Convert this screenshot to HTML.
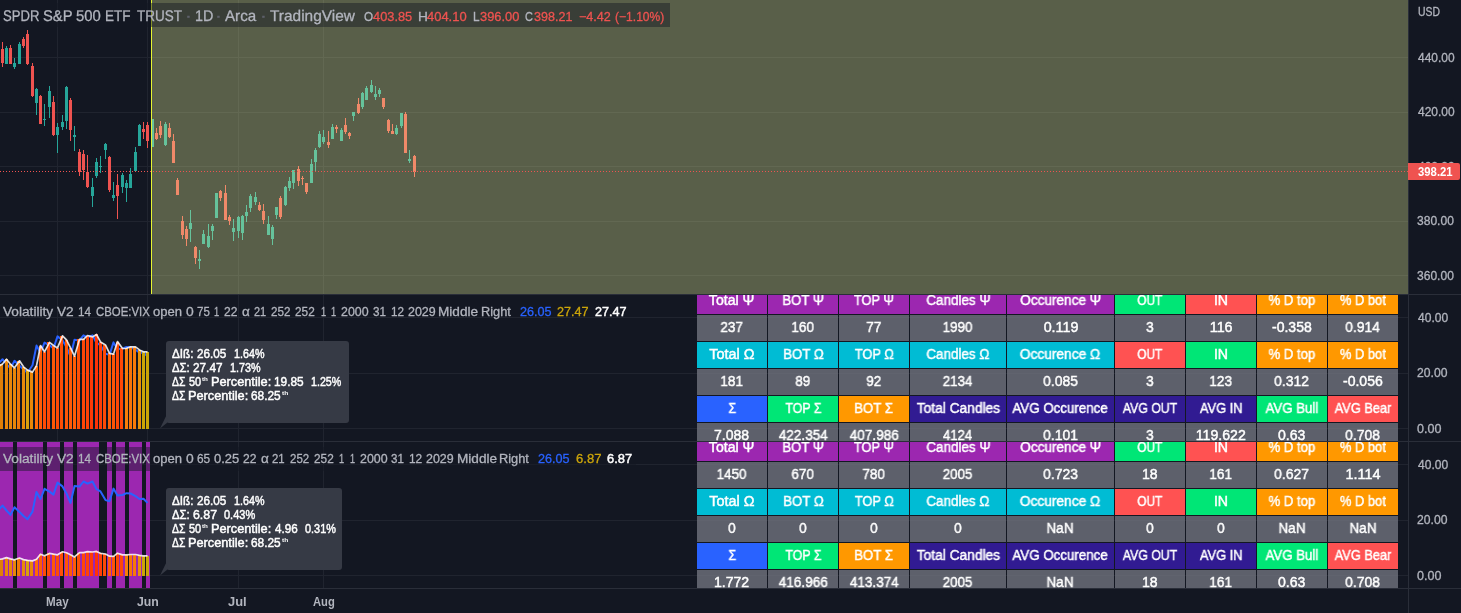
<!DOCTYPE html>
<html><head><meta charset="utf-8"><title>chart</title>
<style>
html,body{margin:0;padding:0}
body{width:1461px;height:613px;background:#131722;overflow:hidden;position:relative;font-family:"Liberation Sans",sans-serif}
svg{position:absolute;left:0;top:0}
.t{position:absolute;white-space:nowrap;line-height:1;transform-origin:0 0;display:block;-webkit-text-stroke:0.3px currentColor}
.t sup{font-size:6px;line-height:0;vertical-align:5px}
.t.nb{-webkit-text-stroke:0}
.tbl{position:absolute;left:697px;width:701px;overflow:hidden}
.c span{will-change:transform;-webkit-text-stroke:0.45px #fff}
.c{position:absolute;height:26px;color:#fff;font-size:14px;line-height:24px;text-align:center;white-space:nowrap}
.c span{display:inline-block}
.lg{position:absolute;left:0;background:rgba(19,23,34,0.46)}
.pl{position:absolute;left:1408px;top:163px;width:52px;height:17px;background:#ef5350;border-radius:0 2px 2px 0}
</style></head><body>
<svg width="1461" height="613" viewBox="0 0 1461 613" shape-rendering="crispEdges">
<rect x="0" y="57" width="1408" height="1" fill="#20242f"/>
<rect x="0" y="112" width="1408" height="1" fill="#20242f"/>
<rect x="0" y="166" width="1408" height="1" fill="#20242f"/>
<rect x="0" y="221" width="1408" height="1" fill="#20242f"/>
<rect x="0" y="275" width="1408" height="1" fill="#20242f"/>
<rect x="57" y="0" width="1" height="294" fill="#20242f"/>
<rect x="57" y="295" width="1" height="146" fill="#20242f"/>
<rect x="57" y="442" width="1" height="146" fill="#20242f"/>
<rect x="147" y="0" width="1" height="294" fill="#20242f"/>
<rect x="147" y="295" width="1" height="146" fill="#20242f"/>
<rect x="147" y="442" width="1" height="146" fill="#20242f"/>
<rect x="238" y="0" width="1" height="294" fill="#20242f"/>
<rect x="238" y="295" width="1" height="146" fill="#20242f"/>
<rect x="238" y="442" width="1" height="146" fill="#20242f"/>
<rect x="323" y="0" width="1" height="294" fill="#20242f"/>
<rect x="323" y="295" width="1" height="146" fill="#20242f"/>
<rect x="323" y="442" width="1" height="146" fill="#20242f"/>
<rect x="0" y="317" width="1408" height="1" fill="#20242f"/>
<rect x="0" y="373" width="1408" height="1" fill="#20242f"/>
<rect x="0" y="428" width="1408" height="1" fill="#20242f"/>
<rect x="0" y="464" width="1408" height="1" fill="#20242f"/>
<rect x="0" y="520" width="1408" height="1" fill="#20242f"/>
<rect x="0" y="575" width="1408" height="1" fill="#20242f"/>
<rect x="2" y="42" width="1" height="25" fill="#ef5350"/>
<rect x="1" y="49" width="3" height="14" fill="#ef5350"/>
<rect x="6" y="46" width="1" height="18" fill="#26a69a"/>
<rect x="5" y="48" width="3" height="16" fill="#26a69a"/>
<rect x="10" y="45" width="1" height="19" fill="#ef5350"/>
<rect x="9" y="48" width="3" height="16" fill="#ef5350"/>
<rect x="14" y="58" width="1" height="11" fill="#26a69a"/>
<rect x="13" y="63" width="3" height="4" fill="#26a69a"/>
<rect x="19" y="42" width="1" height="22" fill="#26a69a"/>
<rect x="18" y="44" width="3" height="20" fill="#26a69a"/>
<rect x="23" y="37" width="1" height="11" fill="#ef5350"/>
<rect x="22" y="39" width="3" height="7" fill="#ef5350"/>
<rect x="27" y="30" width="1" height="35" fill="#ef5350"/>
<rect x="26" y="34" width="3" height="30" fill="#ef5350"/>
<rect x="32" y="63" width="1" height="34" fill="#ef5350"/>
<rect x="31" y="66" width="3" height="30" fill="#ef5350"/>
<rect x="36" y="88" width="1" height="27" fill="#26a69a"/>
<rect x="35" y="89" width="3" height="14" fill="#26a69a"/>
<rect x="40" y="95" width="1" height="29" fill="#ef5350"/>
<rect x="39" y="96" width="3" height="28" fill="#ef5350"/>
<rect x="44" y="104" width="1" height="22" fill="#26a69a"/>
<rect x="43" y="119" width="3" height="1" fill="#26a69a"/>
<rect x="49" y="86" width="1" height="32" fill="#26a69a"/>
<rect x="48" y="91" width="3" height="16" fill="#26a69a"/>
<rect x="53" y="96" width="1" height="40" fill="#ef5350"/>
<rect x="52" y="102" width="3" height="33" fill="#ef5350"/>
<rect x="57" y="123" width="1" height="30" fill="#26a69a"/>
<rect x="56" y="127" width="3" height="8" fill="#26a69a"/>
<rect x="62" y="115" width="1" height="15" fill="#26a69a"/>
<rect x="61" y="122" width="3" height="5" fill="#26a69a"/>
<rect x="66" y="86" width="1" height="43" fill="#26a69a"/>
<rect x="65" y="87" width="3" height="34" fill="#26a69a"/>
<rect x="70" y="98" width="1" height="43" fill="#ef5350"/>
<rect x="69" y="100" width="3" height="30" fill="#ef5350"/>
<rect x="74" y="126" width="1" height="25" fill="#26a69a"/>
<rect x="73" y="135" width="3" height="2" fill="#26a69a"/>
<rect x="79" y="149" width="1" height="27" fill="#ef5350"/>
<rect x="78" y="152" width="3" height="20" fill="#ef5350"/>
<rect x="83" y="150" width="1" height="30" fill="#ef5350"/>
<rect x="82" y="154" width="3" height="16" fill="#ef5350"/>
<rect x="87" y="155" width="1" height="33" fill="#ef5350"/>
<rect x="86" y="172" width="3" height="15" fill="#ef5350"/>
<rect x="92" y="178" width="1" height="29" fill="#26a69a"/>
<rect x="91" y="187" width="3" height="9" fill="#26a69a"/>
<rect x="96" y="158" width="1" height="20" fill="#26a69a"/>
<rect x="95" y="162" width="3" height="14" fill="#26a69a"/>
<rect x="100" y="156" width="1" height="17" fill="#26a69a"/>
<rect x="99" y="166" width="3" height="1" fill="#26a69a"/>
<rect x="105" y="143" width="1" height="16" fill="#26a69a"/>
<rect x="104" y="144" width="3" height="6" fill="#26a69a"/>
<rect x="109" y="156" width="1" height="36" fill="#ef5350"/>
<rect x="108" y="157" width="3" height="33" fill="#ef5350"/>
<rect x="113" y="182" width="1" height="19" fill="#26a69a"/>
<rect x="112" y="195" width="3" height="3" fill="#26a69a"/>
<rect x="117" y="174" width="1" height="45" fill="#ef5350"/>
<rect x="116" y="185" width="3" height="11" fill="#ef5350"/>
<rect x="122" y="173" width="1" height="20" fill="#26a69a"/>
<rect x="121" y="175" width="3" height="12" fill="#26a69a"/>
<rect x="126" y="180" width="1" height="22" fill="#26a69a"/>
<rect x="125" y="183" width="3" height="5" fill="#26a69a"/>
<rect x="130" y="168" width="1" height="20" fill="#26a69a"/>
<rect x="129" y="174" width="3" height="14" fill="#26a69a"/>
<rect x="135" y="147" width="1" height="25" fill="#26a69a"/>
<rect x="134" y="152" width="3" height="19" fill="#26a69a"/>
<rect x="139" y="124" width="1" height="22" fill="#26a69a"/>
<rect x="138" y="125" width="3" height="21" fill="#26a69a"/>
<rect x="143" y="122" width="1" height="17" fill="#ef5350"/>
<rect x="142" y="129" width="3" height="3" fill="#ef5350"/>
<rect x="147" y="122" width="1" height="26" fill="#ef5350"/>
<rect x="146" y="125" width="3" height="16" fill="#ef5350"/>
<rect x="152" y="119" width="1" height="28" fill="#26a69a"/>
<rect x="151" y="119" width="3" height="28" fill="#26a69a"/>
<rect x="156" y="128" width="1" height="12" fill="#ef5350"/>
<rect x="155" y="133" width="3" height="6" fill="#ef5350"/>
<rect x="160" y="121" width="1" height="17" fill="#ef5350"/>
<rect x="159" y="126" width="3" height="9" fill="#ef5350"/>
<rect x="165" y="122" width="1" height="24" fill="#26a69a"/>
<rect x="164" y="124" width="3" height="21" fill="#26a69a"/>
<rect x="169" y="123" width="1" height="15" fill="#ef5350"/>
<rect x="168" y="128" width="3" height="9" fill="#ef5350"/>
<rect x="173" y="134" width="1" height="29" fill="#ef5350"/>
<rect x="172" y="141" width="3" height="22" fill="#ef5350"/>
<rect x="177" y="178" width="1" height="17" fill="#ef5350"/>
<rect x="176" y="180" width="3" height="15" fill="#ef5350"/>
<rect x="182" y="216" width="1" height="23" fill="#ef5350"/>
<rect x="181" y="221" width="3" height="14" fill="#ef5350"/>
<rect x="186" y="226" width="1" height="20" fill="#ef5350"/>
<rect x="185" y="229" width="3" height="10" fill="#ef5350"/>
<rect x="190" y="210" width="1" height="32" fill="#26a69a"/>
<rect x="189" y="223" width="3" height="6" fill="#26a69a"/>
<rect x="195" y="246" width="1" height="18" fill="#ef5350"/>
<rect x="194" y="247" width="3" height="11" fill="#ef5350"/>
<rect x="199" y="250" width="1" height="19" fill="#26a69a"/>
<rect x="198" y="259" width="3" height="2" fill="#26a69a"/>
<rect x="203" y="230" width="1" height="14" fill="#26a69a"/>
<rect x="202" y="234" width="3" height="10" fill="#26a69a"/>
<rect x="208" y="224" width="1" height="24" fill="#26a69a"/>
<rect x="207" y="236" width="3" height="11" fill="#26a69a"/>
<rect x="212" y="224" width="1" height="16" fill="#26a69a"/>
<rect x="211" y="226" width="3" height="5" fill="#26a69a"/>
<rect x="216" y="193" width="1" height="25" fill="#26a69a"/>
<rect x="215" y="193" width="3" height="25" fill="#26a69a"/>
<rect x="220" y="190" width="1" height="11" fill="#ef5350"/>
<rect x="219" y="191" width="3" height="7" fill="#ef5350"/>
<rect x="225" y="185" width="1" height="35" fill="#ef5350"/>
<rect x="224" y="193" width="3" height="27" fill="#ef5350"/>
<rect x="229" y="215" width="1" height="10" fill="#ef5350"/>
<rect x="228" y="217" width="3" height="4" fill="#ef5350"/>
<rect x="233" y="219" width="1" height="22" fill="#26a69a"/>
<rect x="232" y="228" width="3" height="4" fill="#26a69a"/>
<rect x="238" y="216" width="1" height="22" fill="#26a69a"/>
<rect x="237" y="217" width="3" height="14" fill="#26a69a"/>
<rect x="242" y="215" width="1" height="25" fill="#26a69a"/>
<rect x="241" y="216" width="3" height="17" fill="#26a69a"/>
<rect x="246" y="205" width="1" height="17" fill="#26a69a"/>
<rect x="245" y="212" width="3" height="4" fill="#26a69a"/>
<rect x="250" y="194" width="1" height="18" fill="#26a69a"/>
<rect x="249" y="196" width="3" height="12" fill="#26a69a"/>
<rect x="255" y="192" width="1" height="13" fill="#26a69a"/>
<rect x="254" y="197" width="3" height="5" fill="#26a69a"/>
<rect x="259" y="202" width="1" height="9" fill="#ef5350"/>
<rect x="258" y="205" width="3" height="5" fill="#ef5350"/>
<rect x="263" y="204" width="1" height="20" fill="#ef5350"/>
<rect x="262" y="211" width="3" height="9" fill="#ef5350"/>
<rect x="268" y="216" width="1" height="19" fill="#26a69a"/>
<rect x="267" y="224" width="3" height="11" fill="#26a69a"/>
<rect x="272" y="225" width="1" height="20" fill="#26a69a"/>
<rect x="271" y="227" width="3" height="12" fill="#26a69a"/>
<rect x="276" y="207" width="1" height="12" fill="#26a69a"/>
<rect x="275" y="207" width="3" height="8" fill="#26a69a"/>
<rect x="280" y="196" width="1" height="23" fill="#ef5350"/>
<rect x="279" y="198" width="3" height="19" fill="#ef5350"/>
<rect x="285" y="186" width="1" height="20" fill="#26a69a"/>
<rect x="284" y="187" width="3" height="18" fill="#26a69a"/>
<rect x="289" y="177" width="1" height="14" fill="#26a69a"/>
<rect x="288" y="181" width="3" height="7" fill="#26a69a"/>
<rect x="293" y="170" width="1" height="19" fill="#26a69a"/>
<rect x="292" y="170" width="3" height="13" fill="#26a69a"/>
<rect x="298" y="166" width="1" height="20" fill="#ef5350"/>
<rect x="297" y="169" width="3" height="12" fill="#ef5350"/>
<rect x="302" y="176" width="1" height="9" fill="#ef5350"/>
<rect x="301" y="178" width="3" height="1" fill="#ef5350"/>
<rect x="306" y="183" width="1" height="11" fill="#ef5350"/>
<rect x="305" y="183" width="3" height="9" fill="#ef5350"/>
<rect x="311" y="159" width="1" height="24" fill="#26a69a"/>
<rect x="310" y="164" width="3" height="19" fill="#26a69a"/>
<rect x="315" y="148" width="1" height="24" fill="#26a69a"/>
<rect x="314" y="150" width="3" height="12" fill="#26a69a"/>
<rect x="319" y="131" width="1" height="17" fill="#26a69a"/>
<rect x="318" y="134" width="3" height="13" fill="#26a69a"/>
<rect x="323" y="130" width="1" height="14" fill="#26a69a"/>
<rect x="322" y="137" width="3" height="5" fill="#26a69a"/>
<rect x="328" y="131" width="1" height="17" fill="#ef5350"/>
<rect x="327" y="142" width="3" height="3" fill="#ef5350"/>
<rect x="332" y="124" width="1" height="15" fill="#26a69a"/>
<rect x="331" y="127" width="3" height="12" fill="#26a69a"/>
<rect x="336" y="125" width="1" height="8" fill="#ef5350"/>
<rect x="335" y="127" width="3" height="2" fill="#ef5350"/>
<rect x="341" y="128" width="1" height="13" fill="#26a69a"/>
<rect x="340" y="130" width="3" height="11" fill="#26a69a"/>
<rect x="345" y="118" width="1" height="16" fill="#ef5350"/>
<rect x="344" y="125" width="3" height="7" fill="#ef5350"/>
<rect x="349" y="132" width="1" height="7" fill="#ef5350"/>
<rect x="348" y="133" width="3" height="3" fill="#ef5350"/>
<rect x="353" y="112" width="1" height="9" fill="#26a69a"/>
<rect x="352" y="112" width="3" height="4" fill="#26a69a"/>
<rect x="358" y="98" width="1" height="16" fill="#ef5350"/>
<rect x="357" y="104" width="3" height="9" fill="#ef5350"/>
<rect x="362" y="92" width="1" height="17" fill="#26a69a"/>
<rect x="361" y="93" width="3" height="14" fill="#26a69a"/>
<rect x="366" y="86" width="1" height="14" fill="#26a69a"/>
<rect x="365" y="88" width="3" height="12" fill="#26a69a"/>
<rect x="371" y="80" width="1" height="13" fill="#26a69a"/>
<rect x="370" y="85" width="3" height="7" fill="#26a69a"/>
<rect x="375" y="86" width="1" height="14" fill="#26a69a"/>
<rect x="374" y="94" width="3" height="3" fill="#26a69a"/>
<rect x="379" y="88" width="1" height="9" fill="#26a69a"/>
<rect x="378" y="90" width="3" height="4" fill="#26a69a"/>
<rect x="383" y="98" width="1" height="11" fill="#ef5350"/>
<rect x="382" y="98" width="3" height="9" fill="#ef5350"/>
<rect x="388" y="119" width="1" height="14" fill="#ef5350"/>
<rect x="387" y="120" width="3" height="11" fill="#ef5350"/>
<rect x="392" y="124" width="1" height="10" fill="#ef5350"/>
<rect x="391" y="131" width="3" height="3" fill="#ef5350"/>
<rect x="396" y="125" width="1" height="10" fill="#26a69a"/>
<rect x="395" y="128" width="3" height="6" fill="#26a69a"/>
<rect x="401" y="113" width="1" height="15" fill="#26a69a"/>
<rect x="400" y="113" width="3" height="13" fill="#26a69a"/>
<rect x="405" y="112" width="1" height="41" fill="#ef5350"/>
<rect x="404" y="114" width="3" height="39" fill="#ef5350"/>
<rect x="409" y="150" width="1" height="13" fill="#26a69a"/>
<rect x="408" y="159" width="3" height="2" fill="#26a69a"/>
<rect x="414" y="155" width="1" height="22" fill="#ef5350"/>
<rect x="413" y="156" width="3" height="16" fill="#ef5350"/>
<rect x="152" y="0" width="1256" height="294" fill="#f3ff9f" fill-opacity="0.312"/>
<rect x="151" y="0" width="1" height="294" fill="#e6f532"/>
<rect x="0" y="171" width="1" height="1" fill="#ef5350"/><rect x="3" y="171" width="1" height="1" fill="#ef5350"/><rect x="6" y="171" width="1" height="1" fill="#ef5350"/><rect x="9" y="171" width="1" height="1" fill="#ef5350"/><rect x="12" y="171" width="1" height="1" fill="#ef5350"/><rect x="15" y="171" width="1" height="1" fill="#ef5350"/><rect x="18" y="171" width="1" height="1" fill="#ef5350"/><rect x="21" y="171" width="1" height="1" fill="#ef5350"/><rect x="24" y="171" width="1" height="1" fill="#ef5350"/><rect x="27" y="171" width="1" height="1" fill="#ef5350"/><rect x="30" y="171" width="1" height="1" fill="#ef5350"/><rect x="33" y="171" width="1" height="1" fill="#ef5350"/><rect x="36" y="171" width="1" height="1" fill="#ef5350"/><rect x="39" y="171" width="1" height="1" fill="#ef5350"/><rect x="42" y="171" width="1" height="1" fill="#ef5350"/><rect x="45" y="171" width="1" height="1" fill="#ef5350"/><rect x="48" y="171" width="1" height="1" fill="#ef5350"/><rect x="51" y="171" width="1" height="1" fill="#ef5350"/><rect x="54" y="171" width="1" height="1" fill="#ef5350"/><rect x="57" y="171" width="1" height="1" fill="#ef5350"/><rect x="60" y="171" width="1" height="1" fill="#ef5350"/><rect x="63" y="171" width="1" height="1" fill="#ef5350"/><rect x="66" y="171" width="1" height="1" fill="#ef5350"/><rect x="69" y="171" width="1" height="1" fill="#ef5350"/><rect x="72" y="171" width="1" height="1" fill="#ef5350"/><rect x="75" y="171" width="1" height="1" fill="#ef5350"/><rect x="78" y="171" width="1" height="1" fill="#ef5350"/><rect x="81" y="171" width="1" height="1" fill="#ef5350"/><rect x="84" y="171" width="1" height="1" fill="#ef5350"/><rect x="87" y="171" width="1" height="1" fill="#ef5350"/><rect x="90" y="171" width="1" height="1" fill="#ef5350"/><rect x="93" y="171" width="1" height="1" fill="#ef5350"/><rect x="96" y="171" width="1" height="1" fill="#ef5350"/><rect x="99" y="171" width="1" height="1" fill="#ef5350"/><rect x="102" y="171" width="1" height="1" fill="#ef5350"/><rect x="105" y="171" width="1" height="1" fill="#ef5350"/><rect x="108" y="171" width="1" height="1" fill="#ef5350"/><rect x="111" y="171" width="1" height="1" fill="#ef5350"/><rect x="114" y="171" width="1" height="1" fill="#ef5350"/><rect x="117" y="171" width="1" height="1" fill="#ef5350"/><rect x="120" y="171" width="1" height="1" fill="#ef5350"/><rect x="123" y="171" width="1" height="1" fill="#ef5350"/><rect x="126" y="171" width="1" height="1" fill="#ef5350"/><rect x="129" y="171" width="1" height="1" fill="#ef5350"/><rect x="132" y="171" width="1" height="1" fill="#ef5350"/><rect x="135" y="171" width="1" height="1" fill="#ef5350"/><rect x="138" y="171" width="1" height="1" fill="#ef5350"/><rect x="141" y="171" width="1" height="1" fill="#ef5350"/><rect x="144" y="171" width="1" height="1" fill="#ef5350"/><rect x="147" y="171" width="1" height="1" fill="#ef5350"/><rect x="150" y="171" width="1" height="1" fill="#ef5350"/><rect x="153" y="171" width="1" height="1" fill="#ef5350"/><rect x="156" y="171" width="1" height="1" fill="#ef5350"/><rect x="159" y="171" width="1" height="1" fill="#ef5350"/><rect x="162" y="171" width="1" height="1" fill="#ef5350"/><rect x="165" y="171" width="1" height="1" fill="#ef5350"/><rect x="168" y="171" width="1" height="1" fill="#ef5350"/><rect x="171" y="171" width="1" height="1" fill="#ef5350"/><rect x="174" y="171" width="1" height="1" fill="#ef5350"/><rect x="177" y="171" width="1" height="1" fill="#ef5350"/><rect x="180" y="171" width="1" height="1" fill="#ef5350"/><rect x="183" y="171" width="1" height="1" fill="#ef5350"/><rect x="186" y="171" width="1" height="1" fill="#ef5350"/><rect x="189" y="171" width="1" height="1" fill="#ef5350"/><rect x="192" y="171" width="1" height="1" fill="#ef5350"/><rect x="195" y="171" width="1" height="1" fill="#ef5350"/><rect x="198" y="171" width="1" height="1" fill="#ef5350"/><rect x="201" y="171" width="1" height="1" fill="#ef5350"/><rect x="204" y="171" width="1" height="1" fill="#ef5350"/><rect x="207" y="171" width="1" height="1" fill="#ef5350"/><rect x="210" y="171" width="1" height="1" fill="#ef5350"/><rect x="213" y="171" width="1" height="1" fill="#ef5350"/><rect x="216" y="171" width="1" height="1" fill="#ef5350"/><rect x="219" y="171" width="1" height="1" fill="#ef5350"/><rect x="222" y="171" width="1" height="1" fill="#ef5350"/><rect x="225" y="171" width="1" height="1" fill="#ef5350"/><rect x="228" y="171" width="1" height="1" fill="#ef5350"/><rect x="231" y="171" width="1" height="1" fill="#ef5350"/><rect x="234" y="171" width="1" height="1" fill="#ef5350"/><rect x="237" y="171" width="1" height="1" fill="#ef5350"/><rect x="240" y="171" width="1" height="1" fill="#ef5350"/><rect x="243" y="171" width="1" height="1" fill="#ef5350"/><rect x="246" y="171" width="1" height="1" fill="#ef5350"/><rect x="249" y="171" width="1" height="1" fill="#ef5350"/><rect x="252" y="171" width="1" height="1" fill="#ef5350"/><rect x="255" y="171" width="1" height="1" fill="#ef5350"/><rect x="258" y="171" width="1" height="1" fill="#ef5350"/><rect x="261" y="171" width="1" height="1" fill="#ef5350"/><rect x="264" y="171" width="1" height="1" fill="#ef5350"/><rect x="267" y="171" width="1" height="1" fill="#ef5350"/><rect x="270" y="171" width="1" height="1" fill="#ef5350"/><rect x="273" y="171" width="1" height="1" fill="#ef5350"/><rect x="276" y="171" width="1" height="1" fill="#ef5350"/><rect x="279" y="171" width="1" height="1" fill="#ef5350"/><rect x="282" y="171" width="1" height="1" fill="#ef5350"/><rect x="285" y="171" width="1" height="1" fill="#ef5350"/><rect x="288" y="171" width="1" height="1" fill="#ef5350"/><rect x="291" y="171" width="1" height="1" fill="#ef5350"/><rect x="294" y="171" width="1" height="1" fill="#ef5350"/><rect x="297" y="171" width="1" height="1" fill="#ef5350"/><rect x="300" y="171" width="1" height="1" fill="#ef5350"/><rect x="303" y="171" width="1" height="1" fill="#ef5350"/><rect x="306" y="171" width="1" height="1" fill="#ef5350"/><rect x="309" y="171" width="1" height="1" fill="#ef5350"/><rect x="312" y="171" width="1" height="1" fill="#ef5350"/><rect x="315" y="171" width="1" height="1" fill="#ef5350"/><rect x="318" y="171" width="1" height="1" fill="#ef5350"/><rect x="321" y="171" width="1" height="1" fill="#ef5350"/><rect x="324" y="171" width="1" height="1" fill="#ef5350"/><rect x="327" y="171" width="1" height="1" fill="#ef5350"/><rect x="330" y="171" width="1" height="1" fill="#ef5350"/><rect x="333" y="171" width="1" height="1" fill="#ef5350"/><rect x="336" y="171" width="1" height="1" fill="#ef5350"/><rect x="339" y="171" width="1" height="1" fill="#ef5350"/><rect x="342" y="171" width="1" height="1" fill="#ef5350"/><rect x="345" y="171" width="1" height="1" fill="#ef5350"/><rect x="348" y="171" width="1" height="1" fill="#ef5350"/><rect x="351" y="171" width="1" height="1" fill="#ef5350"/><rect x="354" y="171" width="1" height="1" fill="#ef5350"/><rect x="357" y="171" width="1" height="1" fill="#ef5350"/><rect x="360" y="171" width="1" height="1" fill="#ef5350"/><rect x="363" y="171" width="1" height="1" fill="#ef5350"/><rect x="366" y="171" width="1" height="1" fill="#ef5350"/><rect x="369" y="171" width="1" height="1" fill="#ef5350"/><rect x="372" y="171" width="1" height="1" fill="#ef5350"/><rect x="375" y="171" width="1" height="1" fill="#ef5350"/><rect x="378" y="171" width="1" height="1" fill="#ef5350"/><rect x="381" y="171" width="1" height="1" fill="#ef5350"/><rect x="384" y="171" width="1" height="1" fill="#ef5350"/><rect x="387" y="171" width="1" height="1" fill="#ef5350"/><rect x="390" y="171" width="1" height="1" fill="#ef5350"/><rect x="393" y="171" width="1" height="1" fill="#ef5350"/><rect x="396" y="171" width="1" height="1" fill="#ef5350"/><rect x="399" y="171" width="1" height="1" fill="#ef5350"/><rect x="402" y="171" width="1" height="1" fill="#ef5350"/><rect x="405" y="171" width="1" height="1" fill="#ef5350"/><rect x="408" y="171" width="1" height="1" fill="#ef5350"/><rect x="411" y="171" width="1" height="1" fill="#ef5350"/><rect x="414" y="171" width="1" height="1" fill="#ef5350"/><rect x="417" y="171" width="1" height="1" fill="#ef5350"/><rect x="420" y="171" width="1" height="1" fill="#ef5350"/><rect x="423" y="171" width="1" height="1" fill="#ef5350"/><rect x="426" y="171" width="1" height="1" fill="#ef5350"/><rect x="429" y="171" width="1" height="1" fill="#ef5350"/><rect x="432" y="171" width="1" height="1" fill="#ef5350"/><rect x="435" y="171" width="1" height="1" fill="#ef5350"/><rect x="438" y="171" width="1" height="1" fill="#ef5350"/><rect x="441" y="171" width="1" height="1" fill="#ef5350"/><rect x="444" y="171" width="1" height="1" fill="#ef5350"/><rect x="447" y="171" width="1" height="1" fill="#ef5350"/><rect x="450" y="171" width="1" height="1" fill="#ef5350"/><rect x="453" y="171" width="1" height="1" fill="#ef5350"/><rect x="456" y="171" width="1" height="1" fill="#ef5350"/><rect x="459" y="171" width="1" height="1" fill="#ef5350"/><rect x="462" y="171" width="1" height="1" fill="#ef5350"/><rect x="465" y="171" width="1" height="1" fill="#ef5350"/><rect x="468" y="171" width="1" height="1" fill="#ef5350"/><rect x="471" y="171" width="1" height="1" fill="#ef5350"/><rect x="474" y="171" width="1" height="1" fill="#ef5350"/><rect x="477" y="171" width="1" height="1" fill="#ef5350"/><rect x="480" y="171" width="1" height="1" fill="#ef5350"/><rect x="483" y="171" width="1" height="1" fill="#ef5350"/><rect x="486" y="171" width="1" height="1" fill="#ef5350"/><rect x="489" y="171" width="1" height="1" fill="#ef5350"/><rect x="492" y="171" width="1" height="1" fill="#ef5350"/><rect x="495" y="171" width="1" height="1" fill="#ef5350"/><rect x="498" y="171" width="1" height="1" fill="#ef5350"/><rect x="501" y="171" width="1" height="1" fill="#ef5350"/><rect x="504" y="171" width="1" height="1" fill="#ef5350"/><rect x="507" y="171" width="1" height="1" fill="#ef5350"/><rect x="510" y="171" width="1" height="1" fill="#ef5350"/><rect x="513" y="171" width="1" height="1" fill="#ef5350"/><rect x="516" y="171" width="1" height="1" fill="#ef5350"/><rect x="519" y="171" width="1" height="1" fill="#ef5350"/><rect x="522" y="171" width="1" height="1" fill="#ef5350"/><rect x="525" y="171" width="1" height="1" fill="#ef5350"/><rect x="528" y="171" width="1" height="1" fill="#ef5350"/><rect x="531" y="171" width="1" height="1" fill="#ef5350"/><rect x="534" y="171" width="1" height="1" fill="#ef5350"/><rect x="537" y="171" width="1" height="1" fill="#ef5350"/><rect x="540" y="171" width="1" height="1" fill="#ef5350"/><rect x="543" y="171" width="1" height="1" fill="#ef5350"/><rect x="546" y="171" width="1" height="1" fill="#ef5350"/><rect x="549" y="171" width="1" height="1" fill="#ef5350"/><rect x="552" y="171" width="1" height="1" fill="#ef5350"/><rect x="555" y="171" width="1" height="1" fill="#ef5350"/><rect x="558" y="171" width="1" height="1" fill="#ef5350"/><rect x="561" y="171" width="1" height="1" fill="#ef5350"/><rect x="564" y="171" width="1" height="1" fill="#ef5350"/><rect x="567" y="171" width="1" height="1" fill="#ef5350"/><rect x="570" y="171" width="1" height="1" fill="#ef5350"/><rect x="573" y="171" width="1" height="1" fill="#ef5350"/><rect x="576" y="171" width="1" height="1" fill="#ef5350"/><rect x="579" y="171" width="1" height="1" fill="#ef5350"/><rect x="582" y="171" width="1" height="1" fill="#ef5350"/><rect x="585" y="171" width="1" height="1" fill="#ef5350"/><rect x="588" y="171" width="1" height="1" fill="#ef5350"/><rect x="591" y="171" width="1" height="1" fill="#ef5350"/><rect x="594" y="171" width="1" height="1" fill="#ef5350"/><rect x="597" y="171" width="1" height="1" fill="#ef5350"/><rect x="600" y="171" width="1" height="1" fill="#ef5350"/><rect x="603" y="171" width="1" height="1" fill="#ef5350"/><rect x="606" y="171" width="1" height="1" fill="#ef5350"/><rect x="609" y="171" width="1" height="1" fill="#ef5350"/><rect x="612" y="171" width="1" height="1" fill="#ef5350"/><rect x="615" y="171" width="1" height="1" fill="#ef5350"/><rect x="618" y="171" width="1" height="1" fill="#ef5350"/><rect x="621" y="171" width="1" height="1" fill="#ef5350"/><rect x="624" y="171" width="1" height="1" fill="#ef5350"/><rect x="627" y="171" width="1" height="1" fill="#ef5350"/><rect x="630" y="171" width="1" height="1" fill="#ef5350"/><rect x="633" y="171" width="1" height="1" fill="#ef5350"/><rect x="636" y="171" width="1" height="1" fill="#ef5350"/><rect x="639" y="171" width="1" height="1" fill="#ef5350"/><rect x="642" y="171" width="1" height="1" fill="#ef5350"/><rect x="645" y="171" width="1" height="1" fill="#ef5350"/><rect x="648" y="171" width="1" height="1" fill="#ef5350"/><rect x="651" y="171" width="1" height="1" fill="#ef5350"/><rect x="654" y="171" width="1" height="1" fill="#ef5350"/><rect x="657" y="171" width="1" height="1" fill="#ef5350"/><rect x="660" y="171" width="1" height="1" fill="#ef5350"/><rect x="663" y="171" width="1" height="1" fill="#ef5350"/><rect x="666" y="171" width="1" height="1" fill="#ef5350"/><rect x="669" y="171" width="1" height="1" fill="#ef5350"/><rect x="672" y="171" width="1" height="1" fill="#ef5350"/><rect x="675" y="171" width="1" height="1" fill="#ef5350"/><rect x="678" y="171" width="1" height="1" fill="#ef5350"/><rect x="681" y="171" width="1" height="1" fill="#ef5350"/><rect x="684" y="171" width="1" height="1" fill="#ef5350"/><rect x="687" y="171" width="1" height="1" fill="#ef5350"/><rect x="690" y="171" width="1" height="1" fill="#ef5350"/><rect x="693" y="171" width="1" height="1" fill="#ef5350"/><rect x="696" y="171" width="1" height="1" fill="#ef5350"/><rect x="699" y="171" width="1" height="1" fill="#ef5350"/><rect x="702" y="171" width="1" height="1" fill="#ef5350"/><rect x="705" y="171" width="1" height="1" fill="#ef5350"/><rect x="708" y="171" width="1" height="1" fill="#ef5350"/><rect x="711" y="171" width="1" height="1" fill="#ef5350"/><rect x="714" y="171" width="1" height="1" fill="#ef5350"/><rect x="717" y="171" width="1" height="1" fill="#ef5350"/><rect x="720" y="171" width="1" height="1" fill="#ef5350"/><rect x="723" y="171" width="1" height="1" fill="#ef5350"/><rect x="726" y="171" width="1" height="1" fill="#ef5350"/><rect x="729" y="171" width="1" height="1" fill="#ef5350"/><rect x="732" y="171" width="1" height="1" fill="#ef5350"/><rect x="735" y="171" width="1" height="1" fill="#ef5350"/><rect x="738" y="171" width="1" height="1" fill="#ef5350"/><rect x="741" y="171" width="1" height="1" fill="#ef5350"/><rect x="744" y="171" width="1" height="1" fill="#ef5350"/><rect x="747" y="171" width="1" height="1" fill="#ef5350"/><rect x="750" y="171" width="1" height="1" fill="#ef5350"/><rect x="753" y="171" width="1" height="1" fill="#ef5350"/><rect x="756" y="171" width="1" height="1" fill="#ef5350"/><rect x="759" y="171" width="1" height="1" fill="#ef5350"/><rect x="762" y="171" width="1" height="1" fill="#ef5350"/><rect x="765" y="171" width="1" height="1" fill="#ef5350"/><rect x="768" y="171" width="1" height="1" fill="#ef5350"/><rect x="771" y="171" width="1" height="1" fill="#ef5350"/><rect x="774" y="171" width="1" height="1" fill="#ef5350"/><rect x="777" y="171" width="1" height="1" fill="#ef5350"/><rect x="780" y="171" width="1" height="1" fill="#ef5350"/><rect x="783" y="171" width="1" height="1" fill="#ef5350"/><rect x="786" y="171" width="1" height="1" fill="#ef5350"/><rect x="789" y="171" width="1" height="1" fill="#ef5350"/><rect x="792" y="171" width="1" height="1" fill="#ef5350"/><rect x="795" y="171" width="1" height="1" fill="#ef5350"/><rect x="798" y="171" width="1" height="1" fill="#ef5350"/><rect x="801" y="171" width="1" height="1" fill="#ef5350"/><rect x="804" y="171" width="1" height="1" fill="#ef5350"/><rect x="807" y="171" width="1" height="1" fill="#ef5350"/><rect x="810" y="171" width="1" height="1" fill="#ef5350"/><rect x="813" y="171" width="1" height="1" fill="#ef5350"/><rect x="816" y="171" width="1" height="1" fill="#ef5350"/><rect x="819" y="171" width="1" height="1" fill="#ef5350"/><rect x="822" y="171" width="1" height="1" fill="#ef5350"/><rect x="825" y="171" width="1" height="1" fill="#ef5350"/><rect x="828" y="171" width="1" height="1" fill="#ef5350"/><rect x="831" y="171" width="1" height="1" fill="#ef5350"/><rect x="834" y="171" width="1" height="1" fill="#ef5350"/><rect x="837" y="171" width="1" height="1" fill="#ef5350"/><rect x="840" y="171" width="1" height="1" fill="#ef5350"/><rect x="843" y="171" width="1" height="1" fill="#ef5350"/><rect x="846" y="171" width="1" height="1" fill="#ef5350"/><rect x="849" y="171" width="1" height="1" fill="#ef5350"/><rect x="852" y="171" width="1" height="1" fill="#ef5350"/><rect x="855" y="171" width="1" height="1" fill="#ef5350"/><rect x="858" y="171" width="1" height="1" fill="#ef5350"/><rect x="861" y="171" width="1" height="1" fill="#ef5350"/><rect x="864" y="171" width="1" height="1" fill="#ef5350"/><rect x="867" y="171" width="1" height="1" fill="#ef5350"/><rect x="870" y="171" width="1" height="1" fill="#ef5350"/><rect x="873" y="171" width="1" height="1" fill="#ef5350"/><rect x="876" y="171" width="1" height="1" fill="#ef5350"/><rect x="879" y="171" width="1" height="1" fill="#ef5350"/><rect x="882" y="171" width="1" height="1" fill="#ef5350"/><rect x="885" y="171" width="1" height="1" fill="#ef5350"/><rect x="888" y="171" width="1" height="1" fill="#ef5350"/><rect x="891" y="171" width="1" height="1" fill="#ef5350"/><rect x="894" y="171" width="1" height="1" fill="#ef5350"/><rect x="897" y="171" width="1" height="1" fill="#ef5350"/><rect x="900" y="171" width="1" height="1" fill="#ef5350"/><rect x="903" y="171" width="1" height="1" fill="#ef5350"/><rect x="906" y="171" width="1" height="1" fill="#ef5350"/><rect x="909" y="171" width="1" height="1" fill="#ef5350"/><rect x="912" y="171" width="1" height="1" fill="#ef5350"/><rect x="915" y="171" width="1" height="1" fill="#ef5350"/><rect x="918" y="171" width="1" height="1" fill="#ef5350"/><rect x="921" y="171" width="1" height="1" fill="#ef5350"/><rect x="924" y="171" width="1" height="1" fill="#ef5350"/><rect x="927" y="171" width="1" height="1" fill="#ef5350"/><rect x="930" y="171" width="1" height="1" fill="#ef5350"/><rect x="933" y="171" width="1" height="1" fill="#ef5350"/><rect x="936" y="171" width="1" height="1" fill="#ef5350"/><rect x="939" y="171" width="1" height="1" fill="#ef5350"/><rect x="942" y="171" width="1" height="1" fill="#ef5350"/><rect x="945" y="171" width="1" height="1" fill="#ef5350"/><rect x="948" y="171" width="1" height="1" fill="#ef5350"/><rect x="951" y="171" width="1" height="1" fill="#ef5350"/><rect x="954" y="171" width="1" height="1" fill="#ef5350"/><rect x="957" y="171" width="1" height="1" fill="#ef5350"/><rect x="960" y="171" width="1" height="1" fill="#ef5350"/><rect x="963" y="171" width="1" height="1" fill="#ef5350"/><rect x="966" y="171" width="1" height="1" fill="#ef5350"/><rect x="969" y="171" width="1" height="1" fill="#ef5350"/><rect x="972" y="171" width="1" height="1" fill="#ef5350"/><rect x="975" y="171" width="1" height="1" fill="#ef5350"/><rect x="978" y="171" width="1" height="1" fill="#ef5350"/><rect x="981" y="171" width="1" height="1" fill="#ef5350"/><rect x="984" y="171" width="1" height="1" fill="#ef5350"/><rect x="987" y="171" width="1" height="1" fill="#ef5350"/><rect x="990" y="171" width="1" height="1" fill="#ef5350"/><rect x="993" y="171" width="1" height="1" fill="#ef5350"/><rect x="996" y="171" width="1" height="1" fill="#ef5350"/><rect x="999" y="171" width="1" height="1" fill="#ef5350"/><rect x="1002" y="171" width="1" height="1" fill="#ef5350"/><rect x="1005" y="171" width="1" height="1" fill="#ef5350"/><rect x="1008" y="171" width="1" height="1" fill="#ef5350"/><rect x="1011" y="171" width="1" height="1" fill="#ef5350"/><rect x="1014" y="171" width="1" height="1" fill="#ef5350"/><rect x="1017" y="171" width="1" height="1" fill="#ef5350"/><rect x="1020" y="171" width="1" height="1" fill="#ef5350"/><rect x="1023" y="171" width="1" height="1" fill="#ef5350"/><rect x="1026" y="171" width="1" height="1" fill="#ef5350"/><rect x="1029" y="171" width="1" height="1" fill="#ef5350"/><rect x="1032" y="171" width="1" height="1" fill="#ef5350"/><rect x="1035" y="171" width="1" height="1" fill="#ef5350"/><rect x="1038" y="171" width="1" height="1" fill="#ef5350"/><rect x="1041" y="171" width="1" height="1" fill="#ef5350"/><rect x="1044" y="171" width="1" height="1" fill="#ef5350"/><rect x="1047" y="171" width="1" height="1" fill="#ef5350"/><rect x="1050" y="171" width="1" height="1" fill="#ef5350"/><rect x="1053" y="171" width="1" height="1" fill="#ef5350"/><rect x="1056" y="171" width="1" height="1" fill="#ef5350"/><rect x="1059" y="171" width="1" height="1" fill="#ef5350"/><rect x="1062" y="171" width="1" height="1" fill="#ef5350"/><rect x="1065" y="171" width="1" height="1" fill="#ef5350"/><rect x="1068" y="171" width="1" height="1" fill="#ef5350"/><rect x="1071" y="171" width="1" height="1" fill="#ef5350"/><rect x="1074" y="171" width="1" height="1" fill="#ef5350"/><rect x="1077" y="171" width="1" height="1" fill="#ef5350"/><rect x="1080" y="171" width="1" height="1" fill="#ef5350"/><rect x="1083" y="171" width="1" height="1" fill="#ef5350"/><rect x="1086" y="171" width="1" height="1" fill="#ef5350"/><rect x="1089" y="171" width="1" height="1" fill="#ef5350"/><rect x="1092" y="171" width="1" height="1" fill="#ef5350"/><rect x="1095" y="171" width="1" height="1" fill="#ef5350"/><rect x="1098" y="171" width="1" height="1" fill="#ef5350"/><rect x="1101" y="171" width="1" height="1" fill="#ef5350"/><rect x="1104" y="171" width="1" height="1" fill="#ef5350"/><rect x="1107" y="171" width="1" height="1" fill="#ef5350"/><rect x="1110" y="171" width="1" height="1" fill="#ef5350"/><rect x="1113" y="171" width="1" height="1" fill="#ef5350"/><rect x="1116" y="171" width="1" height="1" fill="#ef5350"/><rect x="1119" y="171" width="1" height="1" fill="#ef5350"/><rect x="1122" y="171" width="1" height="1" fill="#ef5350"/><rect x="1125" y="171" width="1" height="1" fill="#ef5350"/><rect x="1128" y="171" width="1" height="1" fill="#ef5350"/><rect x="1131" y="171" width="1" height="1" fill="#ef5350"/><rect x="1134" y="171" width="1" height="1" fill="#ef5350"/><rect x="1137" y="171" width="1" height="1" fill="#ef5350"/><rect x="1140" y="171" width="1" height="1" fill="#ef5350"/><rect x="1143" y="171" width="1" height="1" fill="#ef5350"/><rect x="1146" y="171" width="1" height="1" fill="#ef5350"/><rect x="1149" y="171" width="1" height="1" fill="#ef5350"/><rect x="1152" y="171" width="1" height="1" fill="#ef5350"/><rect x="1155" y="171" width="1" height="1" fill="#ef5350"/><rect x="1158" y="171" width="1" height="1" fill="#ef5350"/><rect x="1161" y="171" width="1" height="1" fill="#ef5350"/><rect x="1164" y="171" width="1" height="1" fill="#ef5350"/><rect x="1167" y="171" width="1" height="1" fill="#ef5350"/><rect x="1170" y="171" width="1" height="1" fill="#ef5350"/><rect x="1173" y="171" width="1" height="1" fill="#ef5350"/><rect x="1176" y="171" width="1" height="1" fill="#ef5350"/><rect x="1179" y="171" width="1" height="1" fill="#ef5350"/><rect x="1182" y="171" width="1" height="1" fill="#ef5350"/><rect x="1185" y="171" width="1" height="1" fill="#ef5350"/><rect x="1188" y="171" width="1" height="1" fill="#ef5350"/><rect x="1191" y="171" width="1" height="1" fill="#ef5350"/><rect x="1194" y="171" width="1" height="1" fill="#ef5350"/><rect x="1197" y="171" width="1" height="1" fill="#ef5350"/><rect x="1200" y="171" width="1" height="1" fill="#ef5350"/><rect x="1203" y="171" width="1" height="1" fill="#ef5350"/><rect x="1206" y="171" width="1" height="1" fill="#ef5350"/><rect x="1209" y="171" width="1" height="1" fill="#ef5350"/><rect x="1212" y="171" width="1" height="1" fill="#ef5350"/><rect x="1215" y="171" width="1" height="1" fill="#ef5350"/><rect x="1218" y="171" width="1" height="1" fill="#ef5350"/><rect x="1221" y="171" width="1" height="1" fill="#ef5350"/><rect x="1224" y="171" width="1" height="1" fill="#ef5350"/><rect x="1227" y="171" width="1" height="1" fill="#ef5350"/><rect x="1230" y="171" width="1" height="1" fill="#ef5350"/><rect x="1233" y="171" width="1" height="1" fill="#ef5350"/><rect x="1236" y="171" width="1" height="1" fill="#ef5350"/><rect x="1239" y="171" width="1" height="1" fill="#ef5350"/><rect x="1242" y="171" width="1" height="1" fill="#ef5350"/><rect x="1245" y="171" width="1" height="1" fill="#ef5350"/><rect x="1248" y="171" width="1" height="1" fill="#ef5350"/><rect x="1251" y="171" width="1" height="1" fill="#ef5350"/><rect x="1254" y="171" width="1" height="1" fill="#ef5350"/><rect x="1257" y="171" width="1" height="1" fill="#ef5350"/><rect x="1260" y="171" width="1" height="1" fill="#ef5350"/><rect x="1263" y="171" width="1" height="1" fill="#ef5350"/><rect x="1266" y="171" width="1" height="1" fill="#ef5350"/><rect x="1269" y="171" width="1" height="1" fill="#ef5350"/><rect x="1272" y="171" width="1" height="1" fill="#ef5350"/><rect x="1275" y="171" width="1" height="1" fill="#ef5350"/><rect x="1278" y="171" width="1" height="1" fill="#ef5350"/><rect x="1281" y="171" width="1" height="1" fill="#ef5350"/><rect x="1284" y="171" width="1" height="1" fill="#ef5350"/><rect x="1287" y="171" width="1" height="1" fill="#ef5350"/><rect x="1290" y="171" width="1" height="1" fill="#ef5350"/><rect x="1293" y="171" width="1" height="1" fill="#ef5350"/><rect x="1296" y="171" width="1" height="1" fill="#ef5350"/><rect x="1299" y="171" width="1" height="1" fill="#ef5350"/><rect x="1302" y="171" width="1" height="1" fill="#ef5350"/><rect x="1305" y="171" width="1" height="1" fill="#ef5350"/><rect x="1308" y="171" width="1" height="1" fill="#ef5350"/><rect x="1311" y="171" width="1" height="1" fill="#ef5350"/><rect x="1314" y="171" width="1" height="1" fill="#ef5350"/><rect x="1317" y="171" width="1" height="1" fill="#ef5350"/><rect x="1320" y="171" width="1" height="1" fill="#ef5350"/><rect x="1323" y="171" width="1" height="1" fill="#ef5350"/><rect x="1326" y="171" width="1" height="1" fill="#ef5350"/><rect x="1329" y="171" width="1" height="1" fill="#ef5350"/><rect x="1332" y="171" width="1" height="1" fill="#ef5350"/><rect x="1335" y="171" width="1" height="1" fill="#ef5350"/><rect x="1338" y="171" width="1" height="1" fill="#ef5350"/><rect x="1341" y="171" width="1" height="1" fill="#ef5350"/><rect x="1344" y="171" width="1" height="1" fill="#ef5350"/><rect x="1347" y="171" width="1" height="1" fill="#ef5350"/><rect x="1350" y="171" width="1" height="1" fill="#ef5350"/><rect x="1353" y="171" width="1" height="1" fill="#ef5350"/><rect x="1356" y="171" width="1" height="1" fill="#ef5350"/><rect x="1359" y="171" width="1" height="1" fill="#ef5350"/><rect x="1362" y="171" width="1" height="1" fill="#ef5350"/><rect x="1365" y="171" width="1" height="1" fill="#ef5350"/><rect x="1368" y="171" width="1" height="1" fill="#ef5350"/><rect x="1371" y="171" width="1" height="1" fill="#ef5350"/><rect x="1374" y="171" width="1" height="1" fill="#ef5350"/><rect x="1377" y="171" width="1" height="1" fill="#ef5350"/><rect x="1380" y="171" width="1" height="1" fill="#ef5350"/><rect x="1383" y="171" width="1" height="1" fill="#ef5350"/><rect x="1386" y="171" width="1" height="1" fill="#ef5350"/><rect x="1389" y="171" width="1" height="1" fill="#ef5350"/><rect x="1392" y="171" width="1" height="1" fill="#ef5350"/><rect x="1395" y="171" width="1" height="1" fill="#ef5350"/><rect x="1398" y="171" width="1" height="1" fill="#ef5350"/><rect x="1401" y="171" width="1" height="1" fill="#ef5350"/><rect x="1404" y="171" width="1" height="1" fill="#ef5350"/><rect x="1407" y="171" width="1" height="1" fill="#ef5350"/>
<rect x="0" y="294" width="1461" height="1" fill="#2a2e39"/>
<rect x="0" y="441" width="1461" height="1" fill="#2a2e39"/>
<rect x="0" y="588" width="1461" height="1" fill="#2a2e39"/>
<rect x="1408" y="0" width="1" height="613" fill="#2a2e39"/>
<polyline points="-1.8,363.8 2.5,359.2 6.5,364.1 10.5,368.4 14.5,360.8 19.5,365.6 23.5,369.5 27.5,372.8 32.5,365.2 36.5,345.6 40.5,352.7 44.5,342.6 49.5,345.4 53.5,348.3 57.5,336.4 62.5,340.2 66.5,347.2 70.5,356.5 74.5,339.7 79.5,340.4 83.5,335.3 87.5,337.5 92.5,335.3 96.5,343.0 100.5,345.2 105.5,353.8 109.5,354.9 113.5,342.4 117.5,349.1 122.5,348.7 126.5,346.9 130.5,347.2 135.5,349.8 139.5,352.7 143.5,352.4 147.5,356.5" fill="none" stroke="#2962ff" stroke-width="2" stroke-opacity="1" stroke-linejoin="round" shape-rendering="geometricPrecision"/>
<rect x="0" y="364" width="3" height="65" fill="#e07e08"/>
<rect x="5" y="359" width="3" height="70" fill="#e8840a"/>
<rect x="9" y="364" width="3" height="65" fill="#e8860a"/>
<rect x="13" y="368" width="3" height="61" fill="#e8860a"/>
<rect x="17" y="361" width="3" height="68" fill="#f07808"/>
<rect x="22" y="367" width="3" height="62" fill="#e88a0a"/>
<rect x="26" y="370" width="3" height="59" fill="#d9a00e"/>
<rect x="30" y="372" width="3" height="57" fill="#e88608"/>
<rect x="35" y="366" width="3" height="63" fill="#ff6a06"/>
<rect x="39" y="346" width="3" height="83" fill="#ff5c06"/>
<rect x="43" y="352" width="3" height="77" fill="#ff4c06"/>
<rect x="47" y="342" width="3" height="87" fill="#ff4a06"/>
<rect x="52" y="346" width="3" height="83" fill="#ff5806"/>
<rect x="56" y="348" width="3" height="81" fill="#ff4a06"/>
<rect x="60" y="336" width="3" height="93" fill="#ff4e06"/>
<rect x="65" y="340" width="3" height="89" fill="#ff5606"/>
<rect x="69" y="348" width="3" height="81" fill="#ff5a06"/>
<rect x="73" y="356" width="3" height="73" fill="#ff5e06"/>
<rect x="77" y="339" width="3" height="90" fill="#ff5006"/>
<rect x="82" y="339" width="3" height="90" fill="#ff4606"/>
<rect x="86" y="336" width="3" height="93" fill="#ff4206"/>
<rect x="90" y="337" width="3" height="92" fill="#ff3a06"/>
<rect x="95" y="334" width="3" height="95" fill="#ff3206"/>
<rect x="99" y="342" width="3" height="87" fill="#ff3e06"/>
<rect x="103" y="345" width="3" height="84" fill="#ff4a06"/>
<rect x="108" y="353" width="3" height="76" fill="#ff6006"/>
<rect x="112" y="354" width="3" height="75" fill="#ff5406"/>
<rect x="116" y="342" width="3" height="87" fill="#ff4806"/>
<rect x="120" y="348" width="3" height="81" fill="#ff4806"/>
<rect x="125" y="348" width="3" height="81" fill="#f87c08"/>
<rect x="129" y="347" width="3" height="82" fill="#f87408"/>
<rect x="133" y="347" width="3" height="82" fill="#f87a08"/>
<rect x="138" y="350" width="3" height="79" fill="#e8900a"/>
<rect x="142" y="352" width="3" height="77" fill="#cba406"/>
<rect x="146" y="352" width="3" height="77" fill="#cba406"/>
<polyline points="-1.8,366.5 2.5,364.0 6.5,359.2 10.5,364.2 14.5,367.8 19.5,360.8 23.5,366.8 27.5,370.1 32.5,372.1 36.5,365.8 40.5,345.5 44.5,351.8 49.5,342.3 53.5,345.5 57.5,347.9 62.5,335.9 66.5,339.9 70.5,347.9 74.5,356.2 79.5,339.3 83.5,339.3 87.5,335.5 92.5,336.9 96.5,334.5 100.5,341.9 105.5,344.9 109.5,353.4 113.5,354.2 117.5,341.5 122.5,348.5 126.5,348.3 130.5,346.9 135.5,346.9 139.5,349.9 143.5,351.8 147.5,351.8" fill="none" stroke="#ffffff" stroke-width="1.7" stroke-opacity="0.85" stroke-linejoin="round" shape-rendering="geometricPrecision"/>
<rect x="0" y="442" width="13" height="146" fill="#9c27b0"/>
<rect x="17" y="442" width="26" height="146" fill="#9c27b0"/>
<rect x="47" y="442" width="13" height="146" fill="#9c27b0"/>
<rect x="64" y="442" width="9" height="146" fill="#9c27b0"/>
<rect x="77" y="442" width="22" height="146" fill="#9c27b0"/>
<rect x="107" y="442" width="5" height="146" fill="#9c27b0"/>
<rect x="116" y="442" width="9" height="146" fill="#9c27b0"/>
<rect x="129" y="442" width="13" height="146" fill="#9c27b0"/>
<rect x="146" y="442" width="4" height="146" fill="#9c27b0"/>
<rect x="0" y="559" width="3" height="17" fill="#e07e08"/>
<rect x="5" y="558" width="3" height="18" fill="#e8840a"/>
<rect x="9" y="559" width="3" height="17" fill="#e8860a"/>
<rect x="13" y="560" width="3" height="16" fill="#e8860a"/>
<rect x="17" y="558" width="3" height="18" fill="#f07808"/>
<rect x="22" y="560" width="3" height="16" fill="#e88a0a"/>
<rect x="26" y="560" width="3" height="16" fill="#d9a00e"/>
<rect x="30" y="561" width="3" height="15" fill="#e88608"/>
<rect x="35" y="559" width="3" height="17" fill="#ff6a06"/>
<rect x="39" y="554" width="3" height="22" fill="#ff5c06"/>
<rect x="43" y="556" width="3" height="20" fill="#ff4c06"/>
<rect x="47" y="553" width="3" height="23" fill="#ff4a06"/>
<rect x="52" y="554" width="3" height="22" fill="#ff5806"/>
<rect x="56" y="555" width="3" height="21" fill="#ff4a06"/>
<rect x="60" y="552" width="3" height="24" fill="#ff4e06"/>
<rect x="65" y="553" width="3" height="23" fill="#ff5606"/>
<rect x="69" y="555" width="3" height="21" fill="#ff5a06"/>
<rect x="73" y="557" width="3" height="19" fill="#ff5e06"/>
<rect x="77" y="553" width="3" height="23" fill="#ff5006"/>
<rect x="82" y="553" width="3" height="23" fill="#ff4606"/>
<rect x="86" y="552" width="3" height="24" fill="#ff4206"/>
<rect x="90" y="552" width="3" height="24" fill="#ff3a06"/>
<rect x="95" y="551" width="3" height="25" fill="#ff3206"/>
<rect x="99" y="553" width="3" height="23" fill="#ff3e06"/>
<rect x="103" y="554" width="3" height="22" fill="#ff4a06"/>
<rect x="108" y="556" width="3" height="20" fill="#ff6006"/>
<rect x="112" y="556" width="3" height="20" fill="#ff5406"/>
<rect x="116" y="553" width="3" height="23" fill="#ff4806"/>
<rect x="120" y="555" width="3" height="21" fill="#ff4806"/>
<rect x="125" y="555" width="3" height="21" fill="#f87c08"/>
<rect x="129" y="555" width="3" height="21" fill="#f87408"/>
<rect x="133" y="555" width="3" height="21" fill="#f87a08"/>
<rect x="138" y="555" width="3" height="21" fill="#e8900a"/>
<rect x="142" y="556" width="3" height="20" fill="#cba406"/>
<rect x="146" y="556" width="3" height="20" fill="#cba406"/>
<polyline points="-1.8,510.3 2.5,505.6 6.5,510.5 10.5,514.9 14.5,507.2 19.5,512.0 23.5,516.0 27.5,519.3 32.5,511.6 36.5,491.9 40.5,499.0 44.5,488.8 49.5,491.6 53.5,494.6 57.5,482.6 62.5,486.4 66.5,493.5 70.5,502.9 74.5,485.9 79.5,486.6 83.5,481.5 87.5,483.7 92.5,481.5 96.5,489.2 100.5,491.4 105.5,500.1 109.5,501.2 113.5,488.6 117.5,495.4 122.5,495.0 126.5,493.2 130.5,493.5 135.5,496.1 139.5,499.0 143.5,498.7 147.5,502.9" fill="none" stroke="#2962ff" stroke-width="2" stroke-opacity="1" stroke-linejoin="round" shape-rendering="geometricPrecision"/>
<polyline points="-1.8,559.5 2.5,558.9 6.5,557.6 10.5,558.9 14.5,559.8 19.5,558.0 23.5,559.6 27.5,560.4 32.5,560.9 36.5,559.3 40.5,554.2 44.5,555.8 49.5,553.4 53.5,554.2 57.5,554.8 62.5,551.8 66.5,552.8 70.5,554.8 74.5,556.9 79.5,552.6 83.5,552.6 87.5,551.7 92.5,552.0 96.5,551.4 100.5,553.3 105.5,554.0 109.5,556.2 113.5,556.4 117.5,553.2 122.5,554.9 126.5,554.9 130.5,554.5 135.5,554.5 139.5,555.3 143.5,555.8 147.5,555.8" fill="none" stroke="#ffffff" stroke-width="1.7" stroke-opacity="0.85" stroke-linejoin="round" shape-rendering="geometricPrecision"/>
<g shape-rendering="geometricPrecision"><rect x="166" y="341" width="183" height="82" rx="3" fill="#363a45"/><path d="M166 416.3 L160 428.5 L166.8 423 L168 421 Z" fill="#363a45"/></g>
<g shape-rendering="geometricPrecision"><rect x="166" y="488" width="176" height="82" rx="3" fill="#363a45"/><path d="M166 563.3 L160 575.5 L166.8 570 L168 568 Z" fill="#363a45"/></g>
</svg>
<div class="lg" style="top:3px;width:670px;height:24px"></div>
<div class="lg" style="top:447px;width:636px;height:23.5px"></div>
<div class="tbl" style="top:295px;height:146px"><div class="c" style="left:0px;top:-7px;width:70px;background:#9c27b0"><span id="c0" style="transform:scaleX(1.0068)">Total Ψ</span></div><div class="c" style="left:71px;top:-7px;width:70px;background:#9c27b0"><span id="c1" style="transform:scaleX(0.9420)">BOT Ψ</span></div><div class="c" style="left:142px;top:-7px;width:70px;background:#9c27b0"><span id="c2" style="transform:scaleX(0.9123)">TOP Ψ</span></div><div class="c" style="left:213px;top:-7px;width:96px;background:#9c27b0"><span id="c3" style="transform:scaleX(0.9609)">Candles Ψ</span></div><div class="c" style="left:310px;top:-7px;width:107px;background:#9c27b0"><span id="c4" style="transform:scaleX(0.9725)">Occurence Ψ</span></div><div class="c" style="left:418px;top:-7px;width:70px;background:#00e676"><span id="c5" style="transform:scaleX(0.8452)">OUT</span></div><div class="c" style="left:489px;top:-7px;width:70px;background:#ff5252"><span id="c6" style="transform:scaleX(1.0128)">IN</span></div><div class="c" style="left:560px;top:-7px;width:70px;background:#ff9800"><span id="c7" style="transform:scaleX(0.9374)">% D top</span></div><div class="c" style="left:631px;top:-7px;width:70px;background:#ff9800"><span id="c8" style="transform:scaleX(0.9218)">% D bot</span></div><div class="c" style="left:0px;top:20px;width:70px;background:rgba(120,123,134,0.733)"><span id="c9" style="transform:scaleX(0.9645)">237</span></div><div class="c" style="left:71px;top:20px;width:70px;background:rgba(120,123,134,0.733)"><span id="c10" style="transform:scaleX(0.9756)">160</span></div><div class="c" style="left:142px;top:20px;width:70px;background:rgba(120,123,134,0.733)"><span id="c11" style="transform:scaleX(0.9740)">77</span></div><div class="c" style="left:213px;top:20px;width:96px;background:rgba(120,123,134,0.733)"><span id="c12" style="transform:scaleX(0.9600)">1990</span></div><div class="c" style="left:310px;top:20px;width:107px;background:rgba(120,123,134,0.733)"><span id="c13" style="transform:scaleX(1.0212)">0.119</span></div><div class="c" style="left:418px;top:20px;width:70px;background:rgba(120,123,134,0.733)"><span id="c14" style="transform:scaleX(0.9689)">3</span></div><div class="c" style="left:489px;top:20px;width:70px;background:rgba(120,123,134,0.733)"><span id="c15" style="transform:scaleX(1.0227)">116</span></div><div class="c" style="left:560px;top:20px;width:70px;background:rgba(120,123,134,0.733)"><span id="c16" style="transform:scaleX(1.0023)">-0.358</span></div><div class="c" style="left:631px;top:20px;width:70px;background:rgba(120,123,134,0.733)"><span id="c17" style="transform:scaleX(0.9839)">0.914</span></div><div class="c" style="left:0px;top:47px;width:70px;background:#00bcd4"><span id="c18" style="transform:scaleX(1.0302)">Total Ω</span></div><div class="c" style="left:71px;top:47px;width:70px;background:#00bcd4"><span id="c19" style="transform:scaleX(0.9455)">BOT Ω</span></div><div class="c" style="left:142px;top:47px;width:70px;background:#00bcd4"><span id="c20" style="transform:scaleX(0.9150)">TOP Ω</span></div><div class="c" style="left:213px;top:47px;width:96px;background:#00bcd4"><span id="c21" style="transform:scaleX(0.9597)">Candles Ω</span></div><div class="c" style="left:310px;top:47px;width:107px;background:#00bcd4"><span id="c22" style="transform:scaleX(0.9815)">Occurence Ω</span></div><div class="c" style="left:418px;top:47px;width:70px;background:#ff5252"><span id="c23" style="transform:scaleX(0.8452)">OUT</span></div><div class="c" style="left:489px;top:47px;width:70px;background:#00e676"><span id="c24" style="transform:scaleX(1.0128)">IN</span></div><div class="c" style="left:560px;top:47px;width:70px;background:#ff9800"><span id="c25" style="transform:scaleX(0.9374)">% D top</span></div><div class="c" style="left:631px;top:47px;width:70px;background:#ff9800"><span id="c26" style="transform:scaleX(0.9218)">% D bot</span></div><div class="c" style="left:0px;top:74px;width:70px;background:rgba(120,123,134,0.733)"><span id="c27" style="transform:scaleX(0.9756)">181</span></div><div class="c" style="left:71px;top:74px;width:70px;background:rgba(120,123,134,0.733)"><span id="c28" style="transform:scaleX(0.9572)">89</span></div><div class="c" style="left:142px;top:74px;width:70px;background:rgba(120,123,134,0.733)"><span id="c29" style="transform:scaleX(0.9572)">92</span></div><div class="c" style="left:213px;top:74px;width:96px;background:rgba(120,123,134,0.733)"><span id="c30" style="transform:scaleX(0.9520)">2134</span></div><div class="c" style="left:310px;top:74px;width:107px;background:rgba(120,123,134,0.733)"><span id="c31" style="transform:scaleX(0.9912)">0.085</span></div><div class="c" style="left:418px;top:74px;width:70px;background:rgba(120,123,134,0.733)"><span id="c32" style="transform:scaleX(0.9689)">3</span></div><div class="c" style="left:489px;top:74px;width:70px;background:rgba(120,123,134,0.733)"><span id="c33" style="transform:scaleX(0.9756)">123</span></div><div class="c" style="left:560px;top:74px;width:70px;background:rgba(120,123,134,0.733)"><span id="c34" style="transform:scaleX(0.9912)">0.312</span></div><div class="c" style="left:631px;top:74px;width:70px;background:rgba(120,123,134,0.733)"><span id="c35" style="transform:scaleX(1.0023)">-0.056</span></div><div class="c" style="left:0px;top:101px;width:70px;background:#2962ff"><span id="c36" style="transform:scaleX(0.8800)">Σ</span></div><div class="c" style="left:71px;top:101px;width:70px;background:#00e676"><span id="c37" style="transform:scaleX(0.8825)">TOP Σ</span></div><div class="c" style="left:142px;top:101px;width:70px;background:#ff9800"><span id="c38" style="transform:scaleX(0.9418)">BOT Σ</span></div><div class="c" style="left:213px;top:101px;width:96px;background:#311b92"><span id="c39" style="transform:scaleX(0.9821)">Total Candles</span></div><div class="c" style="left:310px;top:101px;width:107px;background:#311b92"><span id="c40" style="transform:scaleX(0.9528)">AVG Occurence</span></div><div class="c" style="left:418px;top:101px;width:70px;background:#311b92"><span id="c41" style="transform:scaleX(0.8777)">AVG OUT</span></div><div class="c" style="left:489px;top:101px;width:70px;background:#311b92"><span id="c42" style="transform:scaleX(0.9171)">AVG IN</span></div><div class="c" style="left:560px;top:101px;width:70px;background:#00e676"><span id="c43" style="transform:scaleX(0.9461)">AVG Bull</span></div><div class="c" style="left:631px;top:101px;width:70px;background:#ff5252"><span id="c44" style="transform:scaleX(0.9150)">AVG Bear</span></div><div class="c" style="left:0px;top:128px;width:70px;background:rgba(120,123,134,0.733)"><span id="c45" style="transform:scaleX(0.9985)">7.088</span></div><div class="c" style="left:71px;top:128px;width:70px;background:rgba(120,123,134,0.733)"><span id="c46" style="transform:scaleX(0.9676)">422.354</span></div><div class="c" style="left:142px;top:128px;width:70px;background:rgba(120,123,134,0.733)"><span id="c47" style="transform:scaleX(0.9725)">407.986</span></div><div class="c" style="left:213px;top:128px;width:96px;background:rgba(120,123,134,0.733)"><span id="c48" style="transform:scaleX(0.9364)">4124</span></div><div class="c" style="left:310px;top:128px;width:107px;background:rgba(120,123,134,0.733)"><span id="c49" style="transform:scaleX(0.9912)">0.101</span></div><div class="c" style="left:418px;top:128px;width:70px;background:rgba(120,123,134,0.733)"><span id="c50" style="transform:scaleX(0.9689)">3</span></div><div class="c" style="left:489px;top:128px;width:70px;background:rgba(120,123,134,0.733)"><span id="c51" style="transform:scaleX(1.0079)">119.622</span></div><div class="c" style="left:560px;top:128px;width:70px;background:rgba(120,123,134,0.733)"><span id="c52" style="transform:scaleX(1.0042)">0.63</span></div><div class="c" style="left:631px;top:128px;width:70px;background:rgba(120,123,134,0.733)"><span id="c53" style="transform:scaleX(0.9912)">0.708</span></div></div>
<div class="tbl" style="top:442px;height:146px"><div class="c" style="left:0px;top:-7px;width:70px;background:#9c27b0"><span id="c54" style="transform:scaleX(1.0068)">Total Ψ</span></div><div class="c" style="left:71px;top:-7px;width:70px;background:#9c27b0"><span id="c55" style="transform:scaleX(0.9420)">BOT Ψ</span></div><div class="c" style="left:142px;top:-7px;width:70px;background:#9c27b0"><span id="c56" style="transform:scaleX(0.9123)">TOP Ψ</span></div><div class="c" style="left:213px;top:-7px;width:96px;background:#9c27b0"><span id="c57" style="transform:scaleX(0.9609)">Candles Ψ</span></div><div class="c" style="left:310px;top:-7px;width:107px;background:#9c27b0"><span id="c58" style="transform:scaleX(0.9725)">Occurence Ψ</span></div><div class="c" style="left:418px;top:-7px;width:70px;background:#00e676"><span id="c59" style="transform:scaleX(0.8452)">OUT</span></div><div class="c" style="left:489px;top:-7px;width:70px;background:#ff5252"><span id="c60" style="transform:scaleX(1.0128)">IN</span></div><div class="c" style="left:560px;top:-7px;width:70px;background:#ff9800"><span id="c61" style="transform:scaleX(0.9374)">% D top</span></div><div class="c" style="left:631px;top:-7px;width:70px;background:#ff9800"><span id="c62" style="transform:scaleX(0.9218)">% D bot</span></div><div class="c" style="left:0px;top:20px;width:70px;background:rgba(120,123,134,0.733)"><span id="c63" style="transform:scaleX(0.9600)">1450</span></div><div class="c" style="left:71px;top:20px;width:70px;background:rgba(120,123,134,0.733)"><span id="c64" style="transform:scaleX(0.9645)">670</span></div><div class="c" style="left:142px;top:20px;width:70px;background:rgba(120,123,134,0.733)"><span id="c65" style="transform:scaleX(0.9645)">780</span></div><div class="c" style="left:213px;top:20px;width:96px;background:rgba(120,123,134,0.733)"><span id="c66" style="transform:scaleX(0.9520)">2005</span></div><div class="c" style="left:310px;top:20px;width:107px;background:rgba(120,123,134,0.733)"><span id="c67" style="transform:scaleX(0.9912)">0.723</span></div><div class="c" style="left:418px;top:20px;width:70px;background:rgba(120,123,134,0.733)"><span id="c68" style="transform:scaleX(0.9914)">18</span></div><div class="c" style="left:489px;top:20px;width:70px;background:rgba(120,123,134,0.733)"><span id="c69" style="transform:scaleX(0.9756)">161</span></div><div class="c" style="left:560px;top:20px;width:70px;background:rgba(120,123,134,0.733)"><span id="c70" style="transform:scaleX(0.9912)">0.627</span></div><div class="c" style="left:631px;top:20px;width:70px;background:rgba(120,123,134,0.733)"><span id="c71" style="transform:scaleX(1.0290)">1.114</span></div><div class="c" style="left:0px;top:47px;width:70px;background:#00bcd4"><span id="c72" style="transform:scaleX(1.0302)">Total Ω</span></div><div class="c" style="left:71px;top:47px;width:70px;background:#00bcd4"><span id="c73" style="transform:scaleX(0.9455)">BOT Ω</span></div><div class="c" style="left:142px;top:47px;width:70px;background:#00bcd4"><span id="c74" style="transform:scaleX(0.9150)">TOP Ω</span></div><div class="c" style="left:213px;top:47px;width:96px;background:#00bcd4"><span id="c75" style="transform:scaleX(0.9597)">Candles Ω</span></div><div class="c" style="left:310px;top:47px;width:107px;background:#00bcd4"><span id="c76" style="transform:scaleX(0.9815)">Occurence Ω</span></div><div class="c" style="left:418px;top:47px;width:70px;background:#ff5252"><span id="c77" style="transform:scaleX(0.8452)">OUT</span></div><div class="c" style="left:489px;top:47px;width:70px;background:#00e676"><span id="c78" style="transform:scaleX(1.0128)">IN</span></div><div class="c" style="left:560px;top:47px;width:70px;background:#ff9800"><span id="c79" style="transform:scaleX(0.9374)">% D top</span></div><div class="c" style="left:631px;top:47px;width:70px;background:#ff9800"><span id="c80" style="transform:scaleX(0.9218)">% D bot</span></div><div class="c" style="left:0px;top:74px;width:70px;background:rgba(120,123,134,0.733)"><span id="c81" style="transform:scaleX(0.9689)">0</span></div><div class="c" style="left:71px;top:74px;width:70px;background:rgba(120,123,134,0.733)"><span id="c82" style="transform:scaleX(0.9689)">0</span></div><div class="c" style="left:142px;top:74px;width:70px;background:rgba(120,123,134,0.733)"><span id="c83" style="transform:scaleX(0.9689)">0</span></div><div class="c" style="left:213px;top:74px;width:96px;background:rgba(120,123,134,0.733)"><span id="c84" style="transform:scaleX(0.9689)">0</span></div><div class="c" style="left:310px;top:74px;width:107px;background:rgba(120,123,134,0.733)"><span id="c85" style="transform:scaleX(0.9692)">NaN</span></div><div class="c" style="left:418px;top:74px;width:70px;background:rgba(120,123,134,0.733)"><span id="c86" style="transform:scaleX(0.9689)">0</span></div><div class="c" style="left:489px;top:74px;width:70px;background:rgba(120,123,134,0.733)"><span id="c87" style="transform:scaleX(0.9689)">0</span></div><div class="c" style="left:560px;top:74px;width:70px;background:rgba(120,123,134,0.733)"><span id="c88" style="transform:scaleX(0.9692)">NaN</span></div><div class="c" style="left:631px;top:74px;width:70px;background:rgba(120,123,134,0.733)"><span id="c89" style="transform:scaleX(0.9692)">NaN</span></div><div class="c" style="left:0px;top:101px;width:70px;background:#2962ff"><span id="c90" style="transform:scaleX(0.8800)">Σ</span></div><div class="c" style="left:71px;top:101px;width:70px;background:#00e676"><span id="c91" style="transform:scaleX(0.8825)">TOP Σ</span></div><div class="c" style="left:142px;top:101px;width:70px;background:#ff9800"><span id="c92" style="transform:scaleX(0.9418)">BOT Σ</span></div><div class="c" style="left:213px;top:101px;width:96px;background:#311b92"><span id="c93" style="transform:scaleX(0.9821)">Total Candles</span></div><div class="c" style="left:310px;top:101px;width:107px;background:#311b92"><span id="c94" style="transform:scaleX(0.9528)">AVG Occurence</span></div><div class="c" style="left:418px;top:101px;width:70px;background:#311b92"><span id="c95" style="transform:scaleX(0.8777)">AVG OUT</span></div><div class="c" style="left:489px;top:101px;width:70px;background:#311b92"><span id="c96" style="transform:scaleX(0.9171)">AVG IN</span></div><div class="c" style="left:560px;top:101px;width:70px;background:#00e676"><span id="c97" style="transform:scaleX(0.9461)">AVG Bull</span></div><div class="c" style="left:631px;top:101px;width:70px;background:#ff5252"><span id="c98" style="transform:scaleX(0.9150)">AVG Bear</span></div><div class="c" style="left:0px;top:128px;width:70px;background:rgba(120,123,134,0.733)"><span id="c99" style="transform:scaleX(1.0060)">1.772</span></div><div class="c" style="left:71px;top:128px;width:70px;background:rgba(120,123,134,0.733)"><span id="c100" style="transform:scaleX(0.9725)">416.966</span></div><div class="c" style="left:142px;top:128px;width:70px;background:rgba(120,123,134,0.733)"><span id="c101" style="transform:scaleX(0.9676)">413.374</span></div><div class="c" style="left:213px;top:128px;width:96px;background:rgba(120,123,134,0.733)"><span id="c102" style="transform:scaleX(0.9520)">2005</span></div><div class="c" style="left:310px;top:128px;width:107px;background:rgba(120,123,134,0.733)"><span id="c103" style="transform:scaleX(0.9692)">NaN</span></div><div class="c" style="left:418px;top:128px;width:70px;background:rgba(120,123,134,0.733)"><span id="c104" style="transform:scaleX(0.9914)">18</span></div><div class="c" style="left:489px;top:128px;width:70px;background:rgba(120,123,134,0.733)"><span id="c105" style="transform:scaleX(0.9756)">161</span></div><div class="c" style="left:560px;top:128px;width:70px;background:rgba(120,123,134,0.733)"><span id="c106" style="transform:scaleX(1.0042)">0.63</span></div><div class="c" style="left:631px;top:128px;width:70px;background:rgba(120,123,134,0.733)"><span id="c107" style="transform:scaleX(0.9912)">0.708</span></div></div>
<div style="position:absolute;left:0;top:0;will-change:transform"><span class="t" id="t70" style="left:1417.65px;top:161.00px;font-size:12px;color:#b2b5be;transform:scaleX(0.9972)">400.00</span></div>
<div class="pl"></div>
<div id="txt" style="position:absolute;left:0;top:0;width:1461px;height:613px;will-change:transform">
<span class="t" id="t0" style="left:2.56px;top:8.00px;font-size:15.4px;color:#b2b5be;transform:scaleX(0.8509) rotate(0.05deg)">SPDR</span>
<span class="t" id="t1" style="left:43.08px;top:8.00px;font-size:15.4px;color:#b2b5be;transform:scaleX(0.9607) rotate(0.05deg)">S&amp;P</span>
<span class="t" id="t2" style="left:76.22px;top:8.00px;font-size:15.4px;color:#b2b5be;transform:scaleX(0.9657) rotate(0.05deg)">500</span>
<span class="t" id="t3" style="left:105.00px;top:8.00px;font-size:15.4px;color:#b2b5be;transform:scaleX(0.8771) rotate(0.05deg)">ETF</span>
<span class="t" id="t4" style="left:136.68px;top:8.00px;font-size:15.4px;color:#b2b5be;transform:scaleX(0.8749) rotate(0.05deg)">TRUST</span>
<span class="t" id="t5" style="left:194.77px;top:8.00px;font-size:15.4px;color:#b2b5be;transform:scaleX(0.9333) rotate(0.05deg)">1D</span>
<span class="t" id="t6" style="left:224.80px;top:8.00px;font-size:15.4px;color:#b2b5be;transform:scaleX(0.9858) rotate(0.05deg)">Arca</span>
<span class="t" id="t7" style="left:270.45px;top:8.00px;font-size:15.4px;color:#b2b5be;transform:scaleX(1.0024) rotate(0.05deg)">TradingView</span>
<span class="t" id="t8" style="left:185.17px;top:8.00px;font-size:15.4px;color:#5d606b;transform:scaleX(1.3333) rotate(0.05deg)">·</span>
<span class="t" id="t9" style="left:215.17px;top:8.00px;font-size:15.4px;color:#5d606b;transform:scaleX(1.3333) rotate(0.05deg)">·</span>
<span class="t" id="t10" style="left:260.17px;top:8.00px;font-size:15.4px;color:#5d606b;transform:scaleX(1.3333) rotate(0.05deg)">·</span>
<span class="t" id="t11" style="left:363.53px;top:11.00px;font-size:12.41px;color:#b2b5be;transform:scaleX(0.9412)">O</span>
<span class="t" id="t12" style="left:373.14px;top:11.00px;font-size:12.41px;color:#ef5350;transform:scaleX(1.0336)">403.85</span>
<span class="t" id="t13" style="left:417.50px;top:11.00px;font-size:12.41px;color:#b2b5be;transform:scaleX(1.1000)">H</span>
<span class="t" id="t14" style="left:427.34px;top:11.00px;font-size:12.41px;color:#ef5350;transform:scaleX(1.0443)">404.10</span>
<span class="t" id="t15" style="left:472.85px;top:11.00px;font-size:12.41px;color:#b2b5be;transform:scaleX(0.9455)">L</span>
<span class="t" id="t16" style="left:479.98px;top:11.00px;font-size:12.41px;color:#ef5350;transform:scaleX(1.0378)">396.00</span>
<span class="t" id="t17" style="left:525.16px;top:11.00px;font-size:12.41px;color:#b2b5be;transform:scaleX(0.8875)">C</span>
<span class="t" id="t18" style="left:533.69px;top:11.00px;font-size:12.41px;color:#ef5350;transform:scaleX(1.0108)">398.21</span>
<span class="t" id="t19" style="left:579.09px;top:11.00px;font-size:12.41px;color:#ef5350;transform:scaleX(1.0149)">−4.42</span>
<span class="t" id="t20" style="left:615.27px;top:11.00px;font-size:12.41px;color:#ef5350;transform:scaleX(0.9726)">(−1.10%)</span>
<span class="t" id="t21" style="left:3.40px;top:306.00px;font-size:12.41px;color:#b2b5be;transform:scaleX(1.1024)">Volatility V2</span>
<span class="t" id="t22" style="left:78.29px;top:306.00px;font-size:12.41px;color:#b2b5be;transform:scaleX(0.9412)">14</span>
<span class="t" id="t23" style="left:95.54px;top:306.00px;font-size:12.41px;color:#b2b5be;transform:scaleX(0.9177)">CBOE:VIX</span>
<span class="t" id="t24" style="left:153.07px;top:306.00px;font-size:12.41px;color:#b2b5be;transform:scaleX(1.0514)">open</span>
<span class="t" id="t25" style="left:185.84px;top:306.00px;font-size:12.41px;color:#b2b5be;transform:scaleX(1.1167)">0</span>
<span class="t" id="t26" style="left:196.74px;top:306.00px;font-size:12.41px;color:#b2b5be;transform:scaleX(0.9255)">75</span>
<span class="t" id="t27" style="left:214.04px;top:306.00px;font-size:12.41px;color:#b2b5be;transform:scaleX(0.7455)">1</span>
<span class="t" id="t28" style="left:224.31px;top:306.00px;font-size:12.41px;color:#b2b5be;transform:scaleX(0.9725)">22</span>
<span class="t" id="t29" style="left:242.26px;top:306.00px;font-size:12.41px;color:#b2b5be;transform:scaleX(1.0880)">α</span>
<span class="t" id="t30" style="left:253.66px;top:306.00px;font-size:12.41px;color:#b2b5be;transform:scaleX(0.8863)">21</span>
<span class="t" id="t31" style="left:271.23px;top:306.00px;font-size:12.41px;color:#b2b5be;transform:scaleX(0.9418)">252</span>
<span class="t" id="t32" style="left:295.42px;top:306.00px;font-size:12.41px;color:#b2b5be;transform:scaleX(0.9519)">252</span>
<span class="t" id="t33" style="left:320.74px;top:306.00px;font-size:12.41px;color:#b2b5be;transform:scaleX(0.7455)">1</span>
<span class="t" id="t34" style="left:331.34px;top:306.00px;font-size:12.41px;color:#b2b5be;transform:scaleX(0.7455)">1</span>
<span class="t" id="t35" style="left:341.10px;top:306.00px;font-size:12.41px;color:#b2b5be;transform:scaleX(0.9981)">2000</span>
<span class="t" id="t36" style="left:372.73px;top:306.00px;font-size:12.41px;color:#b2b5be;transform:scaleX(0.9412)">31</span>
<span class="t" id="t37" style="left:390.59px;top:306.00px;font-size:12.41px;color:#b2b5be;transform:scaleX(0.9440)">12</span>
<span class="t" id="t38" style="left:407.80px;top:306.00px;font-size:12.41px;color:#b2b5be;transform:scaleX(1.0038)">2029</span>
<span class="t" id="t39" style="left:438.10px;top:306.00px;font-size:12.41px;color:#b2b5be;transform:scaleX(1.0971)">Middle</span>
<span class="t" id="t40" style="left:480.67px;top:306.00px;font-size:12.41px;color:#b2b5be;transform:scaleX(1.0321)">Right</span>
<span class="t" id="t41" style="left:519.59px;top:306.00px;font-size:12.41px;color:#2962ff;transform:scaleX(1.0167)">26.05</span>
<span class="t" id="t42" style="left:557.29px;top:306.00px;font-size:12.41px;color:#cca50a;transform:scaleX(1.0167)">27.47</span>
<span class="t" id="t43" style="left:595.19px;top:306.00px;font-size:12.41px;color:#ffffff;-webkit-text-stroke:0.45px #fff;transform:scaleX(1.0167)">27.47</span>
<span class="t" id="t44" style="left:3.40px;top:453.00px;font-size:12.41px;color:#b2b5be;transform:scaleX(1.1024)">Volatility V2</span>
<span class="t" id="t45" style="left:78.29px;top:453.00px;font-size:12.41px;color:#b2b5be;transform:scaleX(0.9412)">14</span>
<span class="t" id="t46" style="left:95.54px;top:453.00px;font-size:12.41px;color:#b2b5be;transform:scaleX(0.9177)">CBOE:VIX</span>
<span class="t" id="t47" style="left:153.07px;top:453.00px;font-size:12.41px;color:#b2b5be;transform:scaleX(1.0514)">open</span>
<span class="t" id="t48" style="left:185.84px;top:453.00px;font-size:12.41px;color:#b2b5be;transform:scaleX(1.1167)">0</span>
<span class="t" id="t49" style="left:196.72px;top:453.00px;font-size:12.41px;color:#b2b5be;transform:scaleX(0.9569)">65</span>
<span class="t" id="t50" style="left:213.58px;top:453.00px;font-size:12.41px;color:#b2b5be;transform:scaleX(1.0409)">0.25</span>
<span class="t" id="t51" style="left:243.01px;top:453.00px;font-size:12.41px;color:#b2b5be;transform:scaleX(0.9725)">22</span>
<span class="t" id="t52" style="left:261.06px;top:453.00px;font-size:12.41px;color:#b2b5be;transform:scaleX(1.0880)">α</span>
<span class="t" id="t53" style="left:272.44px;top:453.00px;font-size:12.41px;color:#b2b5be;transform:scaleX(0.9176)">21</span>
<span class="t" id="t54" style="left:290.24px;top:453.00px;font-size:12.41px;color:#b2b5be;transform:scaleX(0.9266)">252</span>
<span class="t" id="t55" style="left:314.02px;top:453.00px;font-size:12.41px;color:#b2b5be;transform:scaleX(0.9519)">252</span>
<span class="t" id="t56" style="left:339.24px;top:453.00px;font-size:12.41px;color:#b2b5be;transform:scaleX(0.7455)">1</span>
<span class="t" id="t57" style="left:350.15px;top:453.00px;font-size:12.41px;color:#b2b5be;transform:scaleX(0.7273)">1</span>
<span class="t" id="t58" style="left:359.60px;top:453.00px;font-size:12.41px;color:#b2b5be;transform:scaleX(0.9981)">2000</span>
<span class="t" id="t59" style="left:391.33px;top:453.00px;font-size:12.41px;color:#b2b5be;transform:scaleX(0.9333)">31</span>
<span class="t" id="t60" style="left:409.08px;top:453.00px;font-size:12.41px;color:#b2b5be;transform:scaleX(0.9600)">12</span>
<span class="t" id="t61" style="left:426.30px;top:453.00px;font-size:12.41px;color:#b2b5be;transform:scaleX(1.0038)">2029</span>
<span class="t" id="t62" style="left:456.90px;top:453.00px;font-size:12.41px;color:#b2b5be;transform:scaleX(1.0971)">Middle</span>
<span class="t" id="t63" style="left:499.17px;top:453.00px;font-size:12.41px;color:#b2b5be;transform:scaleX(1.0321)">Right</span>
<span class="t" id="t64" style="left:538.09px;top:453.00px;font-size:12.41px;color:#2962ff;transform:scaleX(1.0167)">26.05</span>
<span class="t" id="t65" style="left:575.57px;top:453.00px;font-size:12.41px;color:#cca50a;transform:scaleX(1.0522)">6.87</span>
<span class="t" id="t66" style="left:606.98px;top:453.00px;font-size:12.41px;color:#ffffff;-webkit-text-stroke:0.45px #fff;transform:scaleX(1.0391)">6.87</span>
<span class="t" id="t67" style="left:1417.95px;top:6.00px;font-size:12px;color:#b2b5be;transform:scaleX(0.8660)">USD</span>
<span class="t" id="t68" style="left:1417.65px;top:52.00px;font-size:12px;color:#b2b5be;transform:scaleX(0.9972)">440.00</span>
<span class="t" id="t69" style="left:1417.65px;top:106.00px;font-size:12px;color:#b2b5be;transform:scaleX(0.9972)">420.00</span>
<span class="t" id="t71" style="left:1417.40px;top:215.00px;font-size:12px;color:#b2b5be;transform:scaleX(1.0042)">380.00</span>
<span class="t" id="t72" style="left:1417.40px;top:270.00px;font-size:12px;color:#b2b5be;transform:scaleX(1.0042)">360.00</span>
<span class="t" id="t73" style="left:1417.75px;top:312.00px;font-size:12px;color:#b2b5be;transform:scaleX(1.0034)">40.00</span>
<span class="t" id="t74" style="left:1417.49px;top:367.00px;font-size:12px;color:#b2b5be;transform:scaleX(1.0120)">20.00</span>
<span class="t" id="t75" style="left:1417.75px;top:459.00px;font-size:12px;color:#b2b5be;transform:scaleX(1.0034)">40.00</span>
<span class="t" id="t76" style="left:1417.49px;top:514.00px;font-size:12px;color:#b2b5be;transform:scaleX(1.0120)">20.00</span>
<span class="t" id="t77" style="left:1417.38px;top:423.00px;font-size:12px;color:#b2b5be;transform:scaleX(1.0444)">0.00</span>
<span class="t" id="t78" style="left:1417.38px;top:570.00px;font-size:12px;color:#b2b5be;transform:scaleX(1.0444)">0.00</span>
<span class="t nb" id="t79" style="left:45.67px;top:596.00px;font-size:12px;color:#b2b5be;font-weight:bold;transform:scaleX(0.9689)">May</span>
<span class="t nb" id="t80" style="left:136.54px;top:596.00px;font-size:12px;color:#b2b5be;font-weight:bold;transform:scaleX(1.0244)">Jun</span>
<span class="t nb" id="t81" style="left:228.43px;top:596.00px;font-size:12px;color:#b2b5be;font-weight:bold;transform:scaleX(1.0769)">Jul</span>
<span class="t nb" id="t82" style="left:312.97px;top:596.00px;font-size:12px;color:#b2b5be;font-weight:bold;transform:scaleX(0.9333)">Aug</span>
<span class="t" id="t83" style="left:171.76px;top:348.00px;font-size:12px;color:#ffffff;-webkit-text-stroke:0.45px #fff;transform:scaleX(0.9783)">ΔIß:</span>
<span class="t" id="t84" style="left:197.01px;top:348.00px;font-size:12px;color:#ffffff;-webkit-text-stroke:0.45px #fff;transform:scaleX(0.9744)">26.05</span>
<span class="t" id="t85" style="left:233.93px;top:348.00px;font-size:12px;color:#ffffff;-webkit-text-stroke:0.45px #fff;transform:scaleX(0.8939)">1.64%</span>
<span class="t" id="t86" style="left:171.76px;top:362.00px;font-size:12px;color:#ffffff;-webkit-text-stroke:0.45px #fff;transform:scaleX(0.9429)">ΔΣ:</span>
<span class="t" id="t87" style="left:193.31px;top:362.00px;font-size:12px;color:#ffffff;-webkit-text-stroke:0.45px #fff;transform:scaleX(0.9828)">27.47</span>
<span class="t" id="t88" style="left:230.43px;top:362.00px;font-size:12px;color:#ffffff;-webkit-text-stroke:0.45px #fff;transform:scaleX(0.8970)">1.73%</span>
<span class="t" id="t89" style="left:171.78px;top:376.00px;font-size:12px;color:#ffffff;-webkit-text-stroke:0.45px #fff;transform:scaleX(0.8678)">ΔΣ</span>
<span class="t" id="t90" style="left:189.44px;top:376.00px;font-size:12px;color:#ffffff;-webkit-text-stroke:0.45px #fff;transform:scaleX(0.9120)">50</span>
<span class="t" id="t91" style="left:210.94px;top:376.00px;font-size:12px;color:#ffffff;-webkit-text-stroke:0.45px #fff;transform:scaleX(1.0612)">Percentile:</span>
<span class="t" id="t92" style="left:274.06px;top:376.00px;font-size:12px;color:#ffffff;-webkit-text-stroke:0.45px #fff;transform:scaleX(0.9862)">19.85</span>
<span class="t" id="t93" style="left:311.33px;top:376.00px;font-size:12px;color:#ffffff;-webkit-text-stroke:0.45px #fff;transform:scaleX(0.8909)">1.25%</span>
<span class="t nb" id="t94" style="left:201.90px;top:377.00px;font-size:5px;color:#ffffff;font-weight:bold;transform:scaleX(1.2444)">th</span>
<span class="t" id="t95" style="left:171.98px;top:390.00px;font-size:12px;color:#ffffff;-webkit-text-stroke:0.45px #fff;transform:scaleX(0.8610)">ΔΣ</span>
<span class="t" id="t96" style="left:188.44px;top:390.00px;font-size:12px;color:#ffffff;-webkit-text-stroke:0.45px #fff;transform:scaleX(1.0612)">Percentile:</span>
<span class="t" id="t97" style="left:251.31px;top:390.00px;font-size:12px;color:#ffffff;-webkit-text-stroke:0.45px #fff;transform:scaleX(0.9880)">68.25</span>
<span class="t nb" id="t98" style="left:281.70px;top:391.00px;font-size:5px;color:#ffffff;font-weight:bold;transform:scaleX(1.3111)">th</span>
<span class="t" id="t99" style="left:171.76px;top:495.00px;font-size:12px;color:#ffffff;-webkit-text-stroke:0.45px #fff;transform:scaleX(0.9783)">ΔIß:</span>
<span class="t" id="t100" style="left:197.01px;top:495.00px;font-size:12px;color:#ffffff;-webkit-text-stroke:0.45px #fff;transform:scaleX(0.9744)">26.05</span>
<span class="t" id="t101" style="left:233.93px;top:495.00px;font-size:12px;color:#ffffff;-webkit-text-stroke:0.45px #fff;transform:scaleX(0.8939)">1.64%</span>
<span class="t" id="t102" style="left:171.76px;top:509.00px;font-size:12px;color:#ffffff;-webkit-text-stroke:0.45px #fff;transform:scaleX(0.9429)">ΔΣ:</span>
<span class="t" id="t103" style="left:192.89px;top:509.00px;font-size:12px;color:#ffffff;-webkit-text-stroke:0.45px #fff;transform:scaleX(1.0292)">6.87</span>
<span class="t" id="t104" style="left:223.64px;top:509.00px;font-size:12px;color:#ffffff;-webkit-text-stroke:0.45px #fff;transform:scaleX(0.9173)">0.43%</span>
<span class="t" id="t105" style="left:171.78px;top:523.00px;font-size:12px;color:#ffffff;-webkit-text-stroke:0.45px #fff;transform:scaleX(0.8678)">ΔΣ</span>
<span class="t" id="t106" style="left:189.44px;top:523.00px;font-size:12px;color:#ffffff;-webkit-text-stroke:0.45px #fff;transform:scaleX(0.9120)">50</span>
<span class="t" id="t107" style="left:210.94px;top:523.00px;font-size:12px;color:#ffffff;-webkit-text-stroke:0.45px #fff;transform:scaleX(1.0612)">Percentile:</span>
<span class="t" id="t108" style="left:274.56px;top:523.00px;font-size:12px;color:#ffffff;-webkit-text-stroke:0.45px #fff;transform:scaleX(0.9714)">4.96</span>
<span class="t" id="t109" style="left:304.55px;top:523.00px;font-size:12px;color:#ffffff;-webkit-text-stroke:0.45px #fff;transform:scaleX(0.9083)">0.31%</span>
<span class="t nb" id="t110" style="left:201.90px;top:524.00px;font-size:5px;color:#ffffff;font-weight:bold;transform:scaleX(1.2444)">th</span>
<span class="t" id="t111" style="left:171.98px;top:537.00px;font-size:12px;color:#ffffff;-webkit-text-stroke:0.45px #fff;transform:scaleX(0.8610)">ΔΣ</span>
<span class="t" id="t112" style="left:188.44px;top:537.00px;font-size:12px;color:#ffffff;-webkit-text-stroke:0.45px #fff;transform:scaleX(1.0612)">Percentile:</span>
<span class="t" id="t113" style="left:251.31px;top:537.00px;font-size:12px;color:#ffffff;-webkit-text-stroke:0.45px #fff;transform:scaleX(0.9880)">68.25</span>
<span class="t nb" id="t114" style="left:281.70px;top:538.00px;font-size:5px;color:#ffffff;font-weight:bold;transform:scaleX(1.3111)">th</span>
<span class="t nb" id="t115" style="left:1417.86px;top:166.00px;font-size:12px;color:#ffffff;font-weight:bold;transform:scaleX(0.9434)">398.21</span>
</div>

</body></html>
